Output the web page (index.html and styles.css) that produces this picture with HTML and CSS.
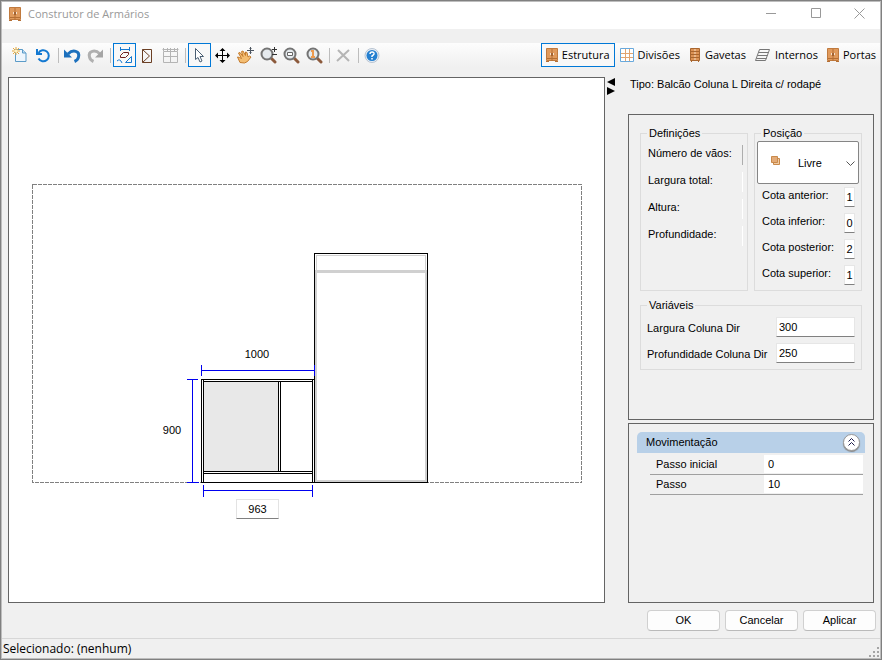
FILE: index.html
```
<!DOCTYPE html>
<html lang="pt-BR">
<head>
    <meta charset="UTF-8">
    <meta name="viewport" content="width=device-width, initial-scale=1.0">
    <title>Construtor de Armários</title>
    <link rel="stylesheet" href="styles.css">
</head>
<body>

<!-- Ícones usados mais de uma vez -->
<svg class="defs" width="0" height="0" aria-hidden="true">
    <symbol id="armario" viewBox="0 0 12 14">
        <path fill="#e09a5c" stroke="#c07a3e" d="M.5.5h11v12H.5z"/>
        <path fill="#b56f34" d="M5.5 1h1v12h-1zM0 13h3v1H0zM9 13h3v1H9zM1 10h10v1H1z"/>
        <path fill="#f7e3cf" d="M4 5h1v2H4zM7 5h1v2H7z"/>
        <path fill="#7b431b" d="M5 5h.5v3H5zM6.5 5H7v3h-.5z"/>
    </symbol>
    <symbol id="lupa" viewBox="0 0 17 17">
        <path stroke="#8c5a3c" stroke-width="3" stroke-linecap="round" d="M11 11l4 4"/>
        <circle cx="7" cy="7" r="5.5" fill="#e5eaee" stroke="#747474" stroke-width="2"/>
    </symbol>
</svg>

<div class="window">
    <header class="titlebar">
        <svg class="app-icon" width="12" height="14"><use href="#armario"/></svg>
        <h1>Construtor de Armários</h1>
        <button class="win-btn" aria-label="Minimizar"><svg width="11" height="11"><path d="M0 5.5h10"/></svg></button>
        <button class="win-btn" aria-label="Maximizar"><svg width="11" height="11"><path d="M.5.5h9v9h-9z"/></svg></button>
        <button class="win-btn" aria-label="Fechar"><svg width="11" height="11"><path d="M.5.5l10 10M10.5.5l-10 10"/></svg></button>
    </header>

    <div class="bars">
        <nav class="toolbar">
            <button class="tool" aria-label="Novo">
                <svg width="17" height="17" viewBox="0 0 17 17"><path fill="#eef6fd" stroke="#5b9bc8" d="M3.5 2.5h7L14 6v8.5H3.5z"/><path fill="#bfdcf2" stroke="#5b9bc8" d="M10.5 2.5V6H14"/><path stroke="#e8a83a" d="M4 0v8M0 4h8M1 1l6 6M7 1L1 7"/><circle cx="4" cy="4" r="1.5" fill="#fff3c4"/></svg>
            </button>
            <button class="tool" aria-label="Recarregar">
                <svg width="17" height="17" viewBox="0 0 17 17"><path fill="none" stroke="#1479d1" stroke-width="2" d="M3.5 6A5.5 5.5 0 1 1 3.5 11.5"/><path fill="#1479d1" d="M1 2v6h6V6H3V2z"/></svg>
            </button>
            <span class="sep"></span>
            <button class="tool" aria-label="Desfazer">
                <svg width="17" height="17" viewBox="0 0 17 17"><path fill="none" stroke="#1c70bd" stroke-width="3" d="M4 7c5-5 12-3 10.5 3q-.5 3-4 4.500"/><path fill="#1c70bd" d="M0 2.5v8h8z"/></svg>
            </button>
            <button class="tool" aria-label="Refazer">
                <svg width="17" height="17" viewBox="0 0 17 17"><path fill="none" stroke="#b0b0b0" stroke-width="3" d="M13 7C8 2 1 4 2.5 10q.5 3 4 4.5"/><path fill="#a5a5a5" d="M16 2.5v8H8z"/></svg>
            </button>
            <span class="sep"></span>
            <button class="tool active" aria-label="Mostrar cotas">
                <svg width="17" height="17" viewBox="0 0 17 17"><path fill="none" stroke="#1479d1" d="M4.5 0v4M13.5 0v4M4.5 2.5h9M1 14q3-3 5 2M9.5 15.5h6v-6z"/><path fill="none" stroke="#6d2020" d="M4.5 10.5v-2l3-3h5v2l-3 3z"/></svg>
            </button>
            <button class="tool" aria-label="Portas visíveis">
                <svg width="17" height="17" viewBox="0 0 17 17"><path fill="none" stroke="#6b3f24" d="M3.5 2.5h9v13h-9zM3.5 2.5l7 6.5-7 6.5"/></svg>
            </button>
            <button class="tool" aria-label="Grade">
                <svg width="17" height="17" viewBox="0 0 17 17"><path fill="none" stroke="#b4b4b4" d="M1.5 4.5h14v11h-14zM8.5 4v12M1 9.5h15M.5 2.5h16M1.5 1v3M5.5 1v3M8.5 1v3M12.5 1v3M15.5 1v3"/></svg>
            </button>
            <span class="sep"></span>
            <button class="tool active" aria-label="Selecionar">
                <svg width="17" height="17" viewBox="0 0 17 17"><path fill="#fff" stroke="#4b5f73" d="M4.5 1.5v11l2.5-2 2 4.5 2-1-2-4.5h3.5z"/></svg>
            </button>
            <button class="tool" aria-label="Mover">
                <svg width="17" height="17" viewBox="0 0 17 17"><path stroke="#000" d="M8.5 2v13M2 8.5h13"/><path d="M8.5 1l3 3h-6zM8.5 16l3-3h-6zM1 8.5l3-3v6zM16 8.5l-3-3v6z"/></svg>
            </button>
            <button class="tool" aria-label="Arrastar">
                <svg width="17" height="17" viewBox="0 0 17 17"><path fill="#f3bd72" stroke="#c47a2b" d="M3 15.5L.5 10l2 .5 2 1-3-5.5L3 5.500l3 4L4.500 4.500 6 4l2.500 4.500V5l1.500.5 1 4.500 1.500-1 1.500 1-3.500 4.500-3 1.500z"/><path stroke="#4d5661" d="M13.5 0v7M10 3.5h7"/><path fill="none" stroke="#4d5661" d="M12.5 1.5l1-1 1 1M12.5 5.5l1 1 1-1"/></svg>
            </button>
            <button class="tool" aria-label="Zoom">
                <svg width="17" height="17"><use href="#lupa"/><path stroke="#333" d="M14.5 0v5M12 2.5h5M12 7.5h5"/></svg>
            </button>
            <button class="tool" aria-label="Zoom janela">
                <svg width="17" height="17"><use href="#lupa"/><path fill="#fff" stroke="#666" d="M4.5 5.5h5v3h-5z"/></svg>
            </button>
            <button class="tool" aria-label="Zoom 1:1">
                <svg width="17" height="17"><use href="#lupa"/><path fill="none" stroke="#ed9a4e" stroke-width="2" d="M5 4h2v6M5 10h4"/></svg>
            </button>
            <span class="sep"></span>
            <button class="tool" aria-label="Excluir">
                <svg width="17" height="17" viewBox="0 0 17 17"><path stroke="#b5b5b5" stroke-width="2" d="M3 3l11 11M14 3L2 14"/></svg>
            </button>
            <span class="sep"></span>
            <button class="tool" aria-label="Ajuda">
                <svg width="17" height="17" viewBox="0 0 17 17"><circle cx="8" cy="8.5" r="7" fill="#e8eef5" stroke="#b8c4d2"/><circle cx="8" cy="8.5" r="5.5" fill="#2580d0"/><path fill="none" stroke="#fff" stroke-width="1.5" d="M6 7c0-3 4.500-2.500 4 0q-.5 1-2 2v1M8 11v1.500"/></svg>
            </button>
        </nav>

        <nav class="tabs">
            <button class="tab active"><svg width="12" height="14"><use href="#armario"/></svg>Estrutura</button>
            <button class="tab"><svg width="14" height="14"><path fill="#fff" stroke="#69a9dc" d="M.5.5h13v13H.5z"/><path stroke="#e2a46f" d="M5.5 1v12M9.5 1v12M1 5.5h12M1 9.5h12"/></svg>Divisões</button>
            <button class="tab"><svg width="12" height="14"><path fill="#dc9355" stroke="#a9662f" d="M1.5.5h9v12h-9zM1 3.5h10M1 6.5h10M1 9.5h10M2.5 13v1M9.5 13v1"/><path stroke="#f5dcc4" d="M5 2h2M5 5h2M5 8h2M5 11h2"/></svg>Gavetas</button>
            <button class="tab"><svg width="16" height="14"><path fill="none" stroke="#777" d="M4.5 1.5h10l-4 11H.5zM3.5 4.5h10M2.5 7.5h10M1.5 10.5h10"/></svg>Internos</button>
            <button class="tab"><svg width="12" height="14"><use href="#armario"/></svg>Portas</button>
        </nav>
    </div>

    <main class="content">
        <section class="canvas">
            <svg class="drawing" viewBox="9 78 595 524" preserveAspectRatio="xMinYMin meet">
                <rect class="limit" x="32.5" y="184.5" width="549" height="298"/>

                <!-- coluna -->
                <rect class="tower" x="314.5" y="253.5" width="113" height="229"/>
                <path class="tower-inner" d="M316.5 270v-14.5h109V270"/>
                <path class="tower-inner thick" d="M316 273v208h110v-208"/>
                <path class="tower-inner bar" d="M315 271.5h112"/>

                <!-- balcão -->
                <rect class="glass" x="204" y="382" width="74" height="89"/>
                <rect class="cabinet" x="201.5" y="379.5" width="113" height="103"/>
                <path class="cabinet" d="M203.5 380v102M312.5 380v102M203 381.5h109M278.5 382v89M280.5 382v89M203 471.5h109M203 473.5h109"/>

                <!-- cotas -->
                <path class="dim" d="M201.5 365v11M314.5 365v11M201 370.5h114"/>
                <path class="dim" d="M187 379.5h11M187 482.5h12M192.5 379v103"/>
                <path class="dim" d="M203.5 485v12M312.5 485v12M203 490.5h110"/>
                <text x="257" y="358">1000</text>
                <text x="172" y="434">900</text>
            </svg>
            <input class="dim-input" type="text" value="963" aria-label="Largura do vão">
        </section>

        <div class="splitter">
            <svg width="8" height="18"><path d="M8 0v8L0 4zM0 9v8l8-4z"/></svg>
        </div>

        <aside class="side">
            <p class="type">Tipo: Balcão Coluna L Direita c/ rodapé</p>

            <section class="panel props">
                <div class="groups">
                    <fieldset class="group">
                        <legend>Definições</legend>
                        <div class="def-row"><span>Número de vãos:</span><i class="edge dark"></i></div>
                        <div class="def-row"><span>Largura total:</span><i class="edge"></i></div>
                        <div class="def-row"><span>Altura:</span><i class="edge"></i></div>
                        <div class="def-row"><span>Profundidade:</span><i class="edge"></i></div>
                    </fieldset>
                    <fieldset class="group">
                        <legend>Posição</legend>
                        <div class="combo">
                            <svg class="combo-icon" width="9" height="9"><path fill="#f0cba4" stroke="#c98a4b" d="M2.5 2.5h6v6h-6z"/><path fill="#e3ab78" stroke="#c98a4b" d="M.5.5h6v6h-6z"/></svg>
                            <select aria-label="Posição"><option>Livre</option></select>
                            <svg class="combo-arrow" width="9" height="5"><path fill="none" stroke="#555" d="M.5.5l4 4 4-4"/></svg>
                        </div>
                        <div class="cota"><label for="anterior">Cota anterior:</label><input id="anterior" type="text" value="1"></div>
                        <div class="cota"><label for="inferior">Cota inferior:</label><input id="inferior" type="text" value="0"></div>
                        <div class="cota"><label for="posterior">Cota posterior:</label><input id="posterior" type="text" value="2"></div>
                        <div class="cota"><label for="superior">Cota superior:</label><input id="superior" type="text" value="1"></div>
                    </fieldset>
                </div>
                <fieldset class="group var-group">
                    <legend>Variáveis</legend>
                    <div class="var-row"><label for="largura">Largura Coluna Dir</label><input id="largura" type="text" value="300"></div>
                    <div class="var-row"><label for="profundidade">Profundidade Coluna Dir</label><input id="profundidade" type="text" value="250"></div>
                </fieldset>
            </section>

            <section class="panel moves">
                <div class="moves-head">
                    <h2>Movimentação</h2>
                    <button class="collapse" aria-label="Recolher"><svg width="7" height="8"><path fill="none" stroke="#1b1b4b" d="M.5 3.5l3-3 3 3M.5 7.5l3-3 3 3"/></svg></button>
                </div>
                <div class="move-row"><label for="inicial">Passo inicial</label><input id="inicial" type="text" value="0"></div>
                <div class="move-row"><label for="passo">Passo</label><input id="passo" type="text" value="10"></div>
            </section>
        </aside>
    </main>

    <div class="actions">
        <button>OK</button>
        <button>Cancelar</button>
        <button>Aplicar</button>
    </div>

    <footer class="status">
        <span>Selecionado: (nenhum)</span>
        <svg width="11" height="11"><path fill="#a5a5a5" d="M8 0h2v2H8zM4 4h2v2H4zM8 4h2v2H8zM0 8h2v2H0zM4 8h2v2H4zM8 8h2v2H8z"/></svg>
    </footer>
</div>

</body>
</html>
```
FILE: styles.css
```
* {
    box-sizing: border-box;
}
body {
    margin: 0;
    font-family: "Liberation Sans", Arial, sans-serif;
    font-size: 11px;
    line-height: 16px;
    color: #000;
}
button, input, select {
    font: inherit;
    color: inherit;
    border: none;
    margin: 0;
    padding: 0;
}
button {
    background: none;
}
h1, h2, p {
    margin: 0;
    font-size: inherit;
    font-weight: normal;
}
svg {
    display: block;
    flex: none;
}
.defs {
    position: absolute;
}
.window {
    display: flex;
    flex-direction: column;
    height: 100vh;
    background-color: #f0f0f0;
    border: 1px solid #808080;
    box-shadow: inset 0 0 0 1px #bdbdbd;
    padding: 1px;
}

/* Título */
.titlebar {
    display: flex;
    align-items: center;
    height: 27px;
    padding: 0 0 4px 7px;
    background-color: #fff;
    font-family: "Open Sans", sans-serif;
    font-size: 11px;
    color: #999;
}
.titlebar h1 {
    flex: 1;
    padding-left: 7px;
}
.win-btn {
    display: grid;
    place-items: center;
    width: 45px;
    height: 23px;
}
.win-btn:last-child {
    width: 41px;
}
.win-btn path {
    fill: none;
    stroke: #999;
}

/* Barras de ferramentas */
.bars {
    display: flex;
    justify-content: space-between;
    height: 24px;
    margin-top: 14px;
    padding-left: 7px;
    background: linear-gradient(#fdfdfd, #f0f0f0);
}
.toolbar, .tabs {
    display: flex;
}
.tabs {
    gap: 1px;
}
.tool {
    display: grid;
    place-items: center;
    width: 23px;
    height: 24px;
}
.tool svg {
    overflow: visible;
}
.tool.active, .tab.active {
    border: 1px solid #0078d7;
    background-color: #f8f8f8;
}
.sep {
    width: 1px;
    height: 15px;
    margin: 5px 2px 0 3px;
    background-color: #bdbdbd;
}
.tab {
    display: flex;
    align-items: center;
    gap: 4px;
    padding: 0 4px;
    font-family: "Open Sans", sans-serif;
    font-size: 11px;
    white-space: nowrap;
}

/* Área principal */
.content {
    flex: 1;
    display: flex;
    min-height: 0;
    margin-top: 10px;
    padding: 0 6px;
}
.canvas {
    position: relative;
    flex: 1;
    min-width: 0;
    border: 1px solid #646464;
    background-color: #fff;
}
.drawing {
    width: 100%;
    height: 100%;
}
.drawing rect, .drawing path {
    fill: none;
    stroke: #000;
    shape-rendering: crispEdges;
}
.drawing text {
    text-anchor: middle;
}
.drawing .limit {
    stroke: #808080;
    stroke-dasharray: 4 1;
}
.drawing .tower-inner {
    stroke: #d0d0d0;
}
.drawing .thick {
    stroke-width: 2;
}
.drawing .bar {
    stroke-width: 3;
}
.drawing .glass {
    fill: #e8e8e8;
    stroke: none;
}
.drawing .dim {
    stroke: #0000f0;
}
.dim-input {
    position: absolute;
    left: 227px;
    top: 421px;
    width: 43px;
    height: 20px;
    border: 1px solid #e3e3e3;
    border-bottom-color: #808080;
    text-align: center;
}
.splitter {
    width: 23px;
    padding: 1px 0 0 2px;
}
.side {
    display: flex;
    flex-direction: column;
    width: 246px;
}
.type {
    height: 37px;
    padding-left: 2px;
    line-height: 14px;
}
.panel {
    min-height: 0;
    border: 1px solid #646464;
}
.props {
    flex: 7;
    padding: 10px 11px;
}
.moves {
    flex: 4;
    margin-top: 3px;
    padding: 8px;
}

/* Grupos */
.groups {
    display: flex;
    gap: 6px;
    height: 166px;
}
.group {
    flex: 1;
    min-width: 0;
    margin: 0;
    padding: 0;
    border: 1px solid #dcdcdc;
}
.group legend {
    margin-left: 6px;
    padding: 0 2px;
}
.def-row {
    display: flex;
    justify-content: space-between;
    height: 27px;
    padding: 4px 4px 0 7px;
}
.edge {
    width: 1px;
    height: 20px;
    background-color: #fff;
}
.edge.dark {
    background-color: #adadad;
}
.combo {
    position: relative;
    height: 43px;
    margin: 0 2px 3px;
}
.combo select {
    width: 100%;
    height: 100%;
    padding-left: 40px;
    border: 1px solid #858585;
    border-radius: 2px;
    background-color: #fff;
    appearance: none;
}
.combo-icon {
    position: absolute;
    left: 14px;
    top: 15px;
}
.combo-arrow {
    position: absolute;
    right: 4px;
    top: 20px;
}
.cota {
    display: flex;
    justify-content: space-between;
    height: 26px;
    padding: 0 6px 0 7px;
}
.group input {
    border: 1px solid #e6e6e6;
    border-bottom-color: #808080;
    background-color: #fff;
}
.cota input {
    width: 11px;
    height: 20px;
    text-align: center;
}
.var-group {
    margin-top: 6px;
    padding-bottom: 4px;
}
.var-row {
    display: flex;
    justify-content: space-between;
    height: 26px;
    padding: 0 6px;
}
.var-row label {
    padding-top: 7px;
}
.var-row input {
    width: 79px;
    height: 20px;
    margin-top: 4px;
    padding-left: 2px;
}

/* Movimentação */
.moves-head {
    display: flex;
    align-items: center;
    justify-content: space-between;
    height: 21px;
    padding: 0 5px 0 9px;
    border-radius: 5px 5px 0 0;
    background-color: #b8d0e8;
}
.collapse {
    display: grid;
    place-items: center;
    width: 17px;
    height: 17px;
    border: 1px solid #999;
    border-radius: 50%;
    background-color: #fff;
    box-shadow: 0 1px 1px #888;
}
.move-row {
    display: flex;
    align-items: center;
    height: 20px;
    margin: 2px 2px 0 13px;
    padding-left: 6px;
    border-bottom: 1px solid #a0a0a0;
}
.move-row + .move-row {
    margin-top: 0;
}
.move-row label {
    width: 108px;
}
.move-row input {
    flex: 1;
    min-width: 0;
    height: 18px;
    padding-left: 4px;
    background-color: #fff;
}

/* Rodapé */
.actions {
    display: flex;
    justify-content: flex-end;
    gap: 5px;
    padding: 7px 4px;
}
.actions button {
    width: 73px;
    height: 21px;
    padding-bottom: 2px;
    border: 1px solid #d0d0d0;
    border-bottom-color: #bababa;
    border-radius: 4px;
    background-color: #fdfdfd;
}
.status {
    display: flex;
    align-items: center;
    justify-content: space-between;
    height: 20px;
    padding-left: 1px;
    border-top: 1px solid #d7d7d7;
    font-family: "Open Sans", sans-serif;
    font-size: 12px;
}
.status svg {
    align-self: flex-end;
}
```
